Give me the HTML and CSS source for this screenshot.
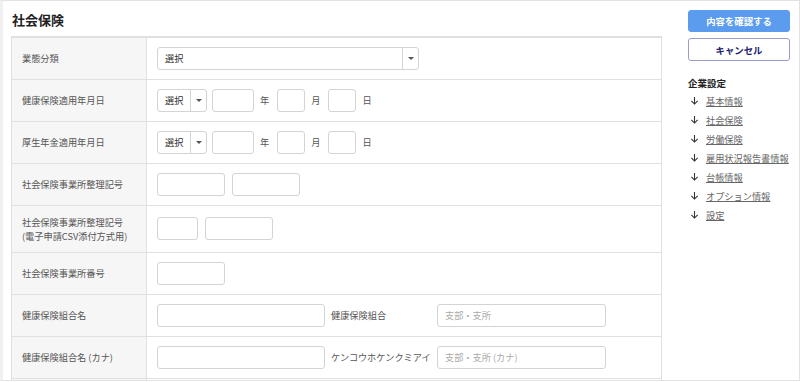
FILE: index.html
```html
<!DOCTYPE html>
<html lang="ja">
<head>
    <meta charset="UTF-8">
    <title>社会保険</title>
    <link rel="stylesheet" href="styles.css">
</head>
<body>
    <div class="frame">
        <div class="main">
            <h2 class="title">社会保険</h2>

            <table class="form-table">
                <tbody>
                    <tr>
                        <th>業態分類</th>
                        <td>
                            <div class="select wide"><span class="select-text">選択</span><span class="caret"></span></div>
                        </td>
                    </tr>
                    <tr>
                        <th>健康保険適用年月日</th>
                        <td>
                            <div class="field-row">
                                <div class="select small"><span class="select-text">選択</span><span class="caret"></span></div>
                                <span class="box w42"></span><span class="unit">年</span>
                                <span class="box w28"></span><span class="unit">月</span>
                                <span class="box w28"></span><span class="unit">日</span>
                            </div>
                        </td>
                    </tr>
                    <tr>
                        <th>厚生年金適用年月日</th>
                        <td>
                            <div class="field-row">
                                <div class="select small"><span class="select-text">選択</span><span class="caret"></span></div>
                                <span class="box w42"></span><span class="unit">年</span>
                                <span class="box w28"></span><span class="unit">月</span>
                                <span class="box w28"></span><span class="unit">日</span>
                            </div>
                        </td>
                    </tr>
                    <tr>
                        <th>社会保険事業所整理記号</th>
                        <td>
                            <div class="field-row gap7">
                                <span class="box w68"></span>
                                <span class="box w68"></span>
                            </div>
                        </td>
                    </tr>
                    <tr class="tall">
                        <th>社会保険事業所整理記号<br>(電子申請CSV添付方式用)</th>
                        <td>
                            <div class="field-row gap7">
                                <span class="box w41"></span>
                                <span class="box w68"></span>
                            </div>
                        </td>
                    </tr>
                    <tr>
                        <th>社会保険事業所番号</th>
                        <td><span class="box w68"></span></td>
                    </tr>
                    <tr>
                        <th>健康保険組合名</th>
                        <td>
                            <div class="field-row">
                                <span class="box w168"></span>
                                <span class="inline-label">健康保険組合</span>
                                <span class="box w169 ph">支部・支所</span>
                            </div>
                        </td>
                    </tr>
                    <tr>
                        <th>健康保険組合名 (カナ)</th>
                        <td>
                            <div class="field-row">
                                <span class="box w168"></span>
                                <span class="inline-label">ケンコウホケンクミアイ</span>
                                <span class="box w169 ph">支部・支所 (カナ)</span>
                            </div>
                        </td>
                    </tr>
                    <tr>
                        <th>&nbsp;</th>
                        <td>&nbsp;</td>
                    </tr>
                </tbody>
            </table>
        </div>

        <div class="side">
            <button class="btn primary">内容を確認する</button>
            <button class="btn outline">キャンセル</button>

            <div class="nav-title">企業設定</div>
            <ul class="nav">
                <li><svg class="arrow" viewBox="0 0 10 10"><path d="M5 1 V9 M1.5 5.5 L5 9 L8.5 5.5" fill="none" stroke="#333" stroke-width="1.2"/></svg><a href="#">基本情報</a></li>
                <li><svg class="arrow" viewBox="0 0 10 10"><path d="M5 1 V9 M1.5 5.5 L5 9 L8.5 5.5" fill="none" stroke="#333" stroke-width="1.2"/></svg><a href="#">社会保険</a></li>
                <li><svg class="arrow" viewBox="0 0 10 10"><path d="M5 1 V9 M1.5 5.5 L5 9 L8.5 5.5" fill="none" stroke="#333" stroke-width="1.2"/></svg><a href="#">労働保険</a></li>
                <li><svg class="arrow" viewBox="0 0 10 10"><path d="M5 1 V9 M1.5 5.5 L5 9 L8.5 5.5" fill="none" stroke="#333" stroke-width="1.2"/></svg><a href="#">雇用状況報告書情報</a></li>
                <li><svg class="arrow" viewBox="0 0 10 10"><path d="M5 1 V9 M1.5 5.5 L5 9 L8.5 5.5" fill="none" stroke="#333" stroke-width="1.2"/></svg><a href="#">台帳情報</a></li>
                <li><svg class="arrow" viewBox="0 0 10 10"><path d="M5 1 V9 M1.5 5.5 L5 9 L8.5 5.5" fill="none" stroke="#333" stroke-width="1.2"/></svg><a href="#">オプション情報</a></li>
                <li><svg class="arrow" viewBox="0 0 10 10"><path d="M5 1 V9 M1.5 5.5 L5 9 L8.5 5.5" fill="none" stroke="#333" stroke-width="1.2"/></svg><a href="#">設定</a></li>
            </ul>
        </div>
    </div>
</body>
</html>
```

FILE: styles.css
```css
body {
    margin: 0;
    font-family: "Noto Sans CJK JP", "Noto Sans", sans-serif;
    background-color: #fff;
    color: #333;
}

.frame {
    width: 800px;
    height: 381px;
    box-sizing: border-box;
    border: 1px solid #e2e2e2;
    border-left-width: 3px;
    border-left-color: #f0f0f0;
    overflow: hidden;
    display: flex;
}

.main {
    width: 660px;
    padding-left: 8px;
    flex-shrink: 0;
}

.title {
    margin: 10px 0 0 1px;
    height: 25px;
    font-size: 13px;
    line-height: 18px;
    font-weight: bold;
    color: #222;
}

/* form table */
.form-table {
    border-collapse: collapse;
    width: 651px;
    font-size: 9.2px;
}

.form-table th,
.form-table td {
    border: 1px solid #e0e0e0;
    height: 42px;
    padding: 0 0 0 10px;
    box-sizing: border-box;
    vertical-align: middle;
}

.form-table th {
    width: 135px;
    background-color: #f6f6f6;
    color: #555;
    font-weight: normal;
    text-align: left;
    line-height: 14px;
}

.form-table tr:first-child th,
.form-table tr:first-child td {
    border-top-width: 2px;
}

.form-table tr.tall th,
.form-table tr.tall td {
    height: 47px;
}

.field-row {
    display: flex;
    align-items: center;
}

.gap7 {
    gap: 7px;
}

.box {
    display: inline-block;
    height: 23px;
    box-sizing: border-box;
    border: 1px solid #d4d4d4;
    border-radius: 3px;
    background-color: #fff;
    vertical-align: middle;
}

.w28 { width: 28px; }
.w41 { width: 41px; }
.w42 { width: 42px; }
.w68 { width: 68px; }
.w168 { width: 168px; }
.w169 { width: 169px; }

.ph {
    color: #aaa;
    line-height: 21px;
    padding-left: 7px;
}

.unit {
    color: #555;
    margin: 0 8px 0 6px;
}

.inline-label {
    color: #555;
    width: 106px;
    margin-left: 6px;
    white-space: nowrap;
}

.select {
    display: flex;
    align-items: center;
    height: 23px;
    box-sizing: border-box;
    border: 1px solid #d4d4d4;
    border-radius: 3px;
    background-color: #fff;
    color: #333;
}

.select.wide {
    width: 262px;
}

.select.small {
    width: 50px;
    margin-right: 5px;
}

.select-text {
    flex: 1;
    padding-left: 7px;
}

.caret {
    width: 15px;
    height: 100%;
    border-left: 1px solid #d4d4d4;
    position: relative;
}

.caret::after {
    content: "";
    position: absolute;
    left: 5px;
    top: 9px;
    border-left: 3px solid transparent;
    border-right: 3px solid transparent;
    border-top: 3px solid #555;
}

/* side column */
.side {
    margin-left: 17px;
    width: 102px;
    padding-top: 9px;
}

.btn {
    display: block;
    width: 102px;
    height: 22px;
    margin-bottom: 6px;
    box-sizing: border-box;
    border-radius: 3px;
    font-family: inherit;
    font-size: 9.4px;
    font-weight: bold;
    padding: 0;
    cursor: pointer;
}

.primary {
    background-color: #5c9cee;
    border: 1px solid #5c9cee;
    color: #fff;
}

.outline {
    height: 23px;
    background-color: #fff;
    border: 1px solid #9a9ccc;
    color: #1c206e;
}

.nav-title {
    margin-top: 15px;
    font-size: 9.5px;
    font-weight: bold;
    color: #222;
    line-height: 14px;
}

.nav {
    list-style: none;
    margin: 1px 0 0;
    padding: 0;
}

.nav li {
    display: flex;
    align-items: center;
    height: 19px;
    font-size: 9.2px;
}

.arrow {
    width: 9px;
    height: 9px;
    margin: 0 7px 0 2px;
}

.nav a {
    color: #666;
    text-decoration: underline;
}
```
